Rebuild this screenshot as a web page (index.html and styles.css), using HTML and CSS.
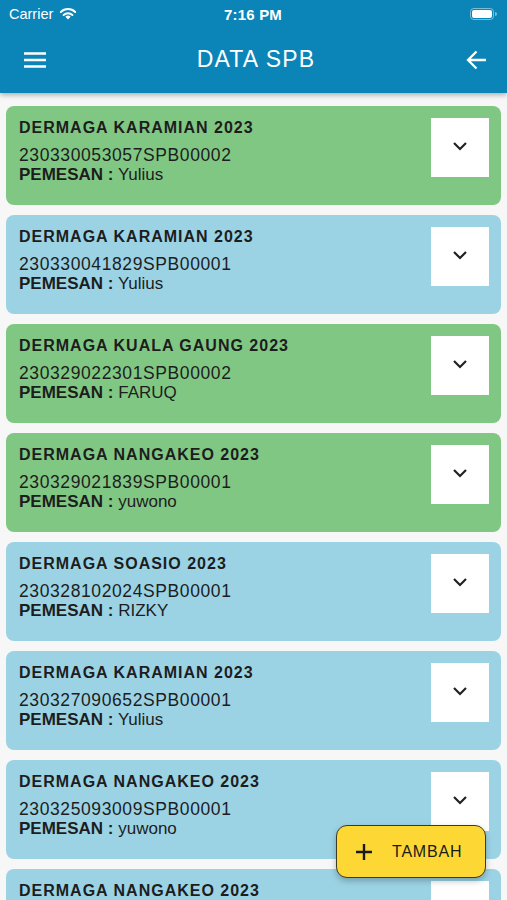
FILE: index.html
```html
<!DOCTYPE html>
<html>
<head>
<meta charset="utf-8">
<link rel="stylesheet" href="styles.css">
</head>
<body>
<div class="screen">
  <header class="topbar">
    <div class="status">
      <div class="status-left">
        <span class="carrier">Carrier</span>
        <svg class="wifi" width="18" height="13" viewBox="0 0 18 13"><path d="M9 12.6 L11.6 9.8 A3.8 3.8 0 0 0 6.4 9.8 Z" fill="#fff"/><path d="M4.6 8 A6.3 6.3 0 0 1 13.4 8" stroke="#fff" stroke-width="2" fill="none" stroke-linecap="round"/><path d="M1.8 5 A10.2 10.2 0 0 1 16.2 5" stroke="#fff" stroke-width="2" fill="none" stroke-linecap="round"/></svg>
      </div>
      <span class="clock">7:16 PM</span>
      <div class="status-right">
        <svg width="27" height="12" viewBox="0 0 27 12"><rect x="0.5" y="0.5" width="23" height="11" rx="3.2" fill="none" stroke="rgba(255,255,255,0.45)"/><rect x="2" y="2" width="20" height="8" rx="2" fill="#fff"/><path d="M25 4 a2 2 0 0 1 0 4 z" fill="rgba(255,255,255,0.45)"/></svg>
      </div>
    </div>
    <div class="appbar">
      <svg class="menu" width="24" height="24" viewBox="0 0 24 24"><path d="M1 5.5h22M1 12h22M1 18.5h22" stroke="#fff" stroke-width="2.3"/></svg>
      <h1 class="title">DATA SPB</h1>
      <svg class="back" width="24" height="24" viewBox="0 0 24 24"><path d="M21 12H3.5M11.5 3.5L3 12l8.5 8.5" stroke="#fff" stroke-width="2.3" fill="none"/></svg>
    </div>
  </header>

  <main class="list">
    <div class="card green">
      <div class="info"><div class="name">DERMAGA KARAMIAN 2023</div><div class="code">230330053057SPB00002</div><div class="who"><b>PEMESAN :</b> Yulius</div></div>
      <div class="toggle"><svg width="16" height="10" viewBox="0 0 16 10"><path d="M2 2l6 6 6-6" stroke="#222" stroke-width="2.2" fill="none"/></svg></div>
    </div>
    <div class="card blue">
      <div class="info"><div class="name">DERMAGA KARAMIAN 2023</div><div class="code">230330041829SPB00001</div><div class="who"><b>PEMESAN :</b> Yulius</div></div>
      <div class="toggle"><svg width="16" height="10" viewBox="0 0 16 10"><path d="M2 2l6 6 6-6" stroke="#222" stroke-width="2.2" fill="none"/></svg></div>
    </div>
    <div class="card green">
      <div class="info"><div class="name">DERMAGA KUALA GAUNG 2023</div><div class="code">230329022301SPB00002</div><div class="who"><b>PEMESAN :</b> FARUQ</div></div>
      <div class="toggle"><svg width="16" height="10" viewBox="0 0 16 10"><path d="M2 2l6 6 6-6" stroke="#222" stroke-width="2.2" fill="none"/></svg></div>
    </div>
    <div class="card green">
      <div class="info"><div class="name">DERMAGA NANGAKEO 2023</div><div class="code">230329021839SPB00001</div><div class="who"><b>PEMESAN :</b> yuwono</div></div>
      <div class="toggle"><svg width="16" height="10" viewBox="0 0 16 10"><path d="M2 2l6 6 6-6" stroke="#222" stroke-width="2.2" fill="none"/></svg></div>
    </div>
    <div class="card blue">
      <div class="info"><div class="name">DERMAGA SOASIO 2023</div><div class="code">230328102024SPB00001</div><div class="who"><b>PEMESAN :</b> RIZKY</div></div>
      <div class="toggle"><svg width="16" height="10" viewBox="0 0 16 10"><path d="M2 2l6 6 6-6" stroke="#222" stroke-width="2.2" fill="none"/></svg></div>
    </div>
    <div class="card blue">
      <div class="info"><div class="name">DERMAGA KARAMIAN 2023</div><div class="code">230327090652SPB00001</div><div class="who"><b>PEMESAN :</b> Yulius</div></div>
      <div class="toggle"><svg width="16" height="10" viewBox="0 0 16 10"><path d="M2 2l6 6 6-6" stroke="#222" stroke-width="2.2" fill="none"/></svg></div>
    </div>
    <div class="card blue">
      <div class="info"><div class="name">DERMAGA NANGAKEO 2023</div><div class="code">230325093009SPB00001</div><div class="who"><b>PEMESAN :</b> yuwono</div></div>
      <div class="toggle"><svg width="16" height="10" viewBox="0 0 16 10"><path d="M2 2l6 6 6-6" stroke="#222" stroke-width="2.2" fill="none"/></svg></div>
    </div>
    <div class="card blue">
      <div class="info"><div class="name">DERMAGA NANGAKEO 2023</div><div class="code">230325090000SPB00001</div><div class="who"><b>PEMESAN :</b> yuwono</div></div>
      <div class="toggle"><svg width="16" height="10" viewBox="0 0 16 10"><path d="M2 2l6 6 6-6" stroke="#222" stroke-width="2.2" fill="none"/></svg></div>
    </div>
  </main>

  <button class="fab">
    <svg width="18" height="18" viewBox="0 0 18 18"><path d="M9 1v16M1 9h16" stroke="#1a1a1a" stroke-width="2.4"/></svg>
    <span>TAMBAH</span>
  </button>
</div>
</body>
</html>
```

FILE: styles.css
```css
* { box-sizing: border-box; }
html, body { margin: 0; padding: 0; }
body {
  font-family: "Liberation Sans", Arial, sans-serif;
  background: #f7f7f7;
}
.screen {
  position: relative;
  width: 507px;
  height: 900px;
  overflow: hidden;
  display: flex;
  flex-direction: column;
}
.topbar {
  background: #0b84b7;
  color: #fff;
  height: 93px;
  flex: none;
  box-shadow: 0 2px 5px rgba(0,0,0,0.3);
  position: relative;
  z-index: 1;
}
.status {
  height: 28px;
  display: flex;
  align-items: center;
  justify-content: space-between;
  padding: 0 10px 0 9px;
  position: relative;
}
.status-left { display: flex; align-items: center; gap: 6px; width: 100px; }
.carrier { font-size: 14.5px; }
.wifi { margin-top: -2px; }
.clock { font-size: 15px; font-weight: bold; letter-spacing: 0.2px; }
.status-right { width: 100px; display: flex; justify-content: flex-end; }
.appbar {
  height: 65px;
  display: flex;
  align-items: center;
  justify-content: space-between;
  padding: 0 18px 2px 23px;
}
.title {
  margin: 0;
  font-size: 23px;
  font-weight: normal;
  letter-spacing: 1.2px;
}
.list {
  flex: 1;
  display: flex;
  flex-direction: column;
  gap: 10px;
  padding: 13px 6px 0 6px;
}
.card {
  flex: none;
  height: 99px;
  border-radius: 8px;
  display: flex;
  justify-content: space-between;
  align-items: flex-start;
  padding: 12px 12px 0 13px;
  color: #1d1d1d;
}
.green { background: #81c784; }
.blue { background: #9bd3e5; }
.name {
  font-size: 16px;
  line-height: 20px;
  font-weight: bold;
  letter-spacing: 1px;
}
.code {
  margin-top: 7px;
  font-size: 17.5px;
  line-height: 20px;
  letter-spacing: 0.6px;
}
.who {
  font-size: 17px;
  line-height: 20px;
}
.toggle {
  width: 58px;
  height: 59px;
  background: #fff;
  display: flex;
  align-items: center;
  justify-content: center;
  padding-bottom: 3px;
}
.fab {
  position: absolute;
  left: 336px;
  top: 825px;
  width: 150px;
  height: 53px;
  background: #fdd835;
  border: 1.5px solid #3d3a24;
  border-radius: 11px;
  display: flex;
  align-items: center;
  gap: 19px;
  padding: 0 0 0 18px;
  font-family: "Liberation Sans", Arial, sans-serif;
  font-size: 16px;
  letter-spacing: 0.8px;
  color: #1a1a1a;
  box-shadow: 0 3px 6px rgba(0,0,0,0.25);
}
```
